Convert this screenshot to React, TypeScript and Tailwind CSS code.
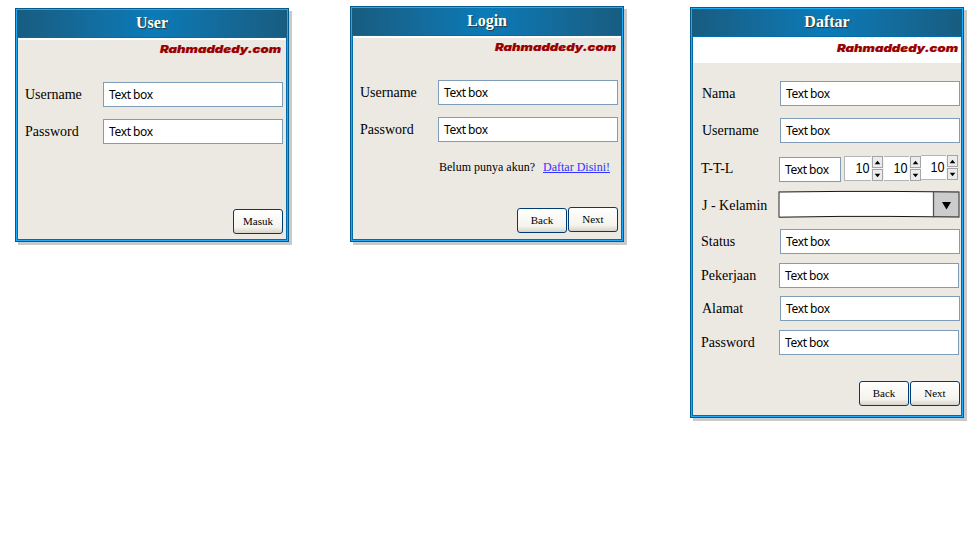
import type { ReactNode } from "react";

const serif = "font-['Liberation_Serif',serif]";

function Brand() {
  return (
    <svg width="124" height="14" className="block overflow-visible">
      <text
        x="1"
        y="11"
        textLength="121"
        lengthAdjust="spacingAndGlyphs"
        strokeWidth="0.2"
        className="fill-[#990000] stroke-[#990000] font-['Inter',sans-serif] text-[11px] font-black italic"
      >
        Rahmaddedy.com
      </text>
    </svg>
  );
}

function Panel({ title, className, children }: { title: string; className: string; children: ReactNode }) {
  return (
    <section
      className={`flex w-[274px] shrink-0 flex-col border border-[#005b8e] bg-[#1aabfb] p-px shadow-[3px_3px_0_#c9c9c9] ${className}`}
    >
      <header
        className={`h-[28px] shrink-0 border-b border-[#006cab] bg-linear-to-r from-[#185c80] via-[#097bb8] to-[#185c80] text-center text-[16px] leading-[26px] font-bold text-white [text-shadow:1px_1px_1px_#333] ${serif}`}
      >
        {title}
      </header>
      <div className="flex min-h-0 flex-1 flex-col border-x border-b border-[#006cab] bg-[#ece9e2]">{children}</div>
    </section>
  );
}

function TextBox({ className = "w-[180px]" }: { className?: string }) {
  return (
    <div
      className={`h-[25px] shrink-0 border border-[#7f9db9] bg-white pl-[5px] font-['Noto_Sans',sans-serif] text-[12px] leading-[24px] tracking-[-0.35px] whitespace-pre text-black [word-spacing:-0.4px] ${className}`}
    >
      Text box
    </div>
  );
}

function Field({ label, className, labelClass = "w-[78px]", children }: { label: string; className: string; labelClass?: string; children?: ReactNode }) {
  return (
    <div className={`flex h-[25px] shrink-0 items-start ${className}`}>
      <span className={`shrink-0 text-[14px] leading-[25px] whitespace-nowrap text-black ${serif} ${labelClass}`}>{label}</span>
      {children ?? <TextBox />}
    </div>
  );
}

function Button({ children, className = "" }: { children: ReactNode; className?: string }) {
  return (
    <button
      className={`h-[25px] w-[50px] shrink-0 rounded-[3px] border border-[#003c74] bg-linear-to-b from-white from-0% via-[#f4f3ee] via-75% to-[#d8d3c8] text-center text-[11px] leading-[23px] text-black ${serif} ${className}`}
    >
      {children}
    </button>
  );
}

function StepButton({ up = false }: { up?: boolean }) {
  return (
    <div className="flex h-[12px] w-[11px] items-center justify-center border border-[#a5a5a5] bg-[#ececec]">
      <svg width="5" height="3" viewBox="0 0 5 3" className="shrink-0 overflow-visible">
        <path d={up ? "M-.3 3.2 2.5 -.3 5.3 3.2z" : "M-.3 -.2h5.6L2.5 3.3z"} fill="#000" />
      </svg>
    </div>
  );
}

function Spinner({ className, inputClass = "w-[27px]" }: { className: string; inputClass?: string }) {
  return (
    <div className={`flex h-[25px] shrink-0 bg-[#f4f4f2] ${className}`}>
      <div
        className={`shrink-0 border-y border-[#b4b4b4] bg-white pr-[1px] text-right font-['Liberation_Sans',sans-serif] text-[14px] leading-[23px] text-black ${inputClass}`}
      >
        <span className="inline-block origin-right scale-x-90">10</span>
      </div>
      <div className="ml-px flex flex-col justify-between">
        <StepButton up />
        <StepButton />
      </div>
    </div>
  );
}

function Dropdown() {
  return (
    <svg width="182" height="28" className="block shrink-0">
      <path d="M1 2 L62 1.4 L112 1.4 L181 2 V27 L112 27 L62 26.4 L1 27z" fill="#fff" />
      <path d="M156 2h25v25h-25z" fill="#ccc" />
      <path d="M1 2 L62 1.4 L112 1.4 L181 2 M1 27.2 L62 26.4 L112 26.4 L181 27" fill="none" stroke="#161616" />
      <path d="M1 1.5v26M155.5 1.5v26M181 1.5v26" fill="none" stroke="#555" strokeWidth="1.3" />
      <path d="M164 12h9l-4.5 7.5z" fill="#000" />
    </svg>
  );
}

export default function App() {
  return (
    <main className="flex h-[538px] w-[977px] items-start overflow-hidden bg-white">
      <Panel title="User" className="mt-[8px] ml-[15px] h-[234px]">
        <div className="h-[2px] shrink-0 bg-white" />
        <div className="mt-[2px] flex h-[14px] justify-end pr-[3px]">
          <Brand />
        </div>
        <Field label="Username" className="mt-[26px] pl-[7px]" />
        <Field label="Password" className="mt-[12px] pl-[7px]" />
        <div className="mt-[65px] flex justify-end pr-[3px]">
          <Button>Masuk</Button>
        </div>
      </Panel>

      <Panel title="Login" className="mt-[6px] ml-[61px] h-[236px]">
        <div className="h-[2px] shrink-0 bg-white" />
        <div className="mt-[2px] flex h-[14px] justify-end pr-[3px]">
          <Brand />
        </div>
        <Field label="Username" className="mt-[26px] pl-[7px]" />
        <Field label="Password" className="mt-[12px] pl-[7px]" />
        <p className={`mt-[17px] flex h-[16px] pl-[86px] text-[12px] leading-[16px] whitespace-nowrap text-black ${serif}`}>
          <span className="w-[104px]">Belum punya akun?</span>
          <a className="text-[#3333ff] underline">Daftar Disini!</a>
        </p>
        <div className="mt-[32px] flex justify-end gap-px pr-[3px]">
          <Button className="mt-px">Back</Button>
          <Button>Next</Button>
        </div>
      </Panel>

      <Panel title="Daftar" className="mt-[7px] ml-[66px] h-[411px]">
        <div className="flex h-[26px] shrink-0 justify-end bg-white pt-[4px] pr-px">
          <Brand />
        </div>
        <Field label="Nama" className="mt-[18px] pl-[9px]" />
        <Field label="Username" className="mt-[12px] pl-[9px]" />
        <div className="mt-[12px] flex h-[27px] shrink-0 items-start pl-[8px]">
          <span className={`w-[78px] text-[14px] leading-[27px] text-black ${serif}`}>T-T-L</span>
          <TextBox className="mt-[2px] w-[62px]" />
          <Spinner className="mt-px ml-[3px] w-[39px]" inputClass="w-[27px] border-l" />
          <Spinner className="mt-px w-[38px]" inputClass="ml-px w-[25px]" />
          <Spinner className="w-[37px]" inputClass="w-[25px]" />
        </div>
        <Field label="J - Kelamin" className="mt-[10px] pl-[9px]" labelClass="w-[76px] pt-px">
          <div className="-mt-[2px]">
            <Dropdown />
          </div>
        </Field>
        <Field label="Status" className="mt-[12px] pl-[8px]" labelClass="w-[79px]" />
        <Field label="Pekerjaan" className="mt-[9px] pl-[8px]" />
        <Field label="Alamat" className="mt-[8px] pl-[9px]" />
        <Field label="Password" className="mt-[9px] pl-[8px]" />
        <div className="mt-[26px] flex justify-end gap-px pr-px">
          <Button>Back</Button>
          <Button>Next</Button>
        </div>
      </Panel>
    </main>
  );
}
